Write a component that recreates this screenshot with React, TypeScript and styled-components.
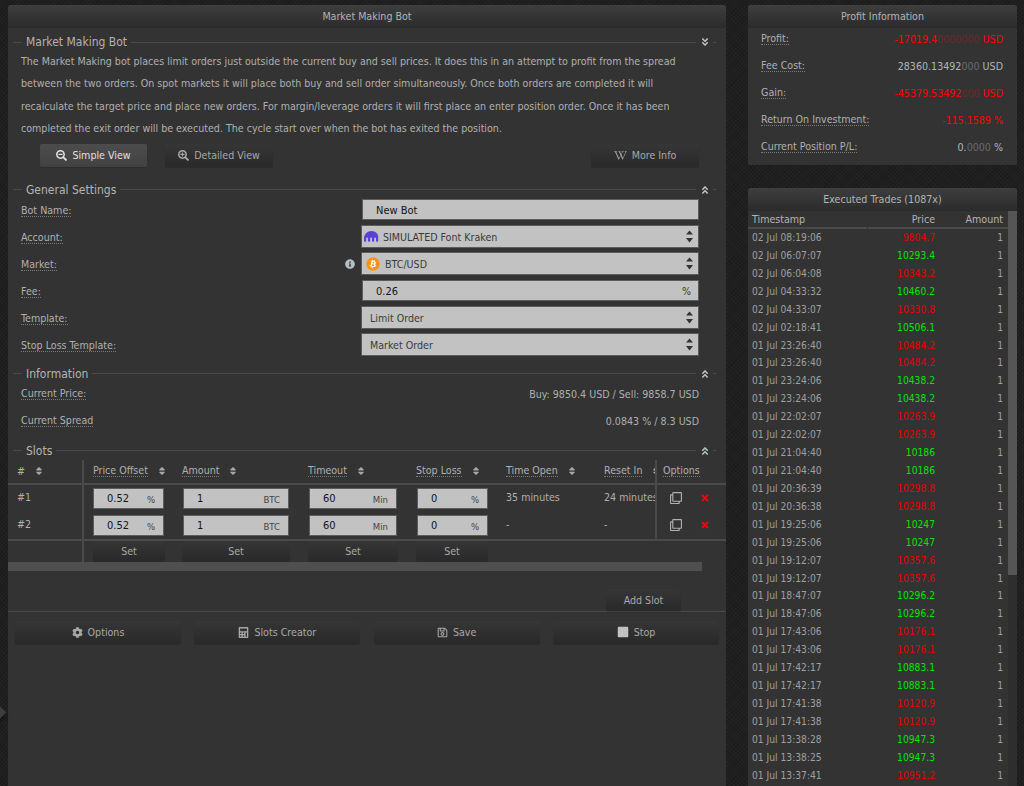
import * as React from 'react';
import styled, { createGlobalStyle } from 'styled-components';
import {
	FaAngleDoubleDown,
	FaAngleDoubleUp,
	FaBitcoin,
	FaCalculator,
	FaCog,
	FaInfoCircle,
	FaRegClone,
	FaRegSave,
	FaSearchMinus,
	FaSearchPlus,
	FaSort,
	FaStop,
	FaTimes,
	FaWikipediaW,
} from 'react-icons/fa';

const font = '"DejaVu Sans Condensed", "DejaVu Sans", sans-serif';

const Global = createGlobalStyle`
	html, body {
		margin: 0;
		height: 786px;
		overflow: hidden;
		background-color: #1f1f1f;
		background-image:
			repeating-linear-gradient(45deg, rgba(255,255,255,0.018) 0 1px, transparent 1px 3px),
			repeating-linear-gradient(-45deg, rgba(0,0,0,0.12) 0 1px, transparent 1px 3px);
		font-family: ${font};
		font-stretch: condensed;
		font-size: 10.6px;
		color: #b0b0b0;
	}
	* { box-sizing: border-box; }
`;

const Page = styled.div`
	display: flex;
	height: 786px;
	padding: 5px 7px 0 8px;
	gap: 22px;
	overflow: hidden;
`;

const SideHandle = styled.div`
	position: absolute;
	left: -7px;
	top: 707px;
	width: 11px;
	height: 11px;
	background: #3e3e3e;
	transform: rotate(45deg);
	box-shadow: 2px 2px 4px rgba(0,0,0,0.5);
`;

const Panel = styled.section<{ $width?: number; $height?: number; $grow?: boolean }>`
	width: ${p => (p.$width ? p.$width + 'px' : '100%')};
	${p => p.$height && `height: ${p.$height}px;`}
	${p => p.$grow && 'flex: 1; min-height: 0;'}
	background: #333333;
	border-radius: 3px 3px 0 0;
	flex-shrink: 0;
	overflow: hidden;
`;

const PanelTitle = styled.header`
	height: 23px;
	line-height: 22px;
	text-align: center;
	color: #b4b4b4;
	background: linear-gradient(#3e3e3e, #2b2b2b);
`;

const RightColumn = styled.div`
	width: 269px;
	display: flex;
	flex-direction: column;
	gap: 23px;
	height: 100%;
`;

const Section = styled.div<{ $top: number }>`
	padding: ${p => p.$top}px 10px 0 5px;
`;

const Legend = styled.div`
	display: flex;
	align-items: center;
	height: 16px;
	color: #b4b4b4;
	font-size: 12px;
	&::before {
		content: '';
		width: 9px;
		height: 1px;
		background: #4a4a4a;
		margin-right: 4px;
	}
	&::after {
		content: '';
		width: 3px;
		height: 1px;
		background: #4a4a4a;
		margin-left: 3px;
	}
`;

const LegendLine = styled.span`
	flex: 1;
	height: 1px;
	background: #4a4a4a;
	margin: 0 4px;
`;

const Chevrons = styled.span`
	display: flex;
	font-size: 10px;
	color: #b9c4cc;
`;

const Description = styled.p`
	margin: 0;
	line-height: 22.4px;
	padding: 0 13px;
	white-space: nowrap;
`;

const Actions = styled.div`
	display: flex;
	gap: 18px;
	padding: 4px 27px 0 32px;
`;

const Button = styled.button<{ $active?: boolean; $width?: number; $pushRight?: boolean }>`
	display: flex;
	align-items: center;
	justify-content: center;
	gap: 5px;
	width: ${p => (p.$width ? p.$width + 'px' : 'auto')};
	height: 23px;
	padding: 0;
	border: 0;
	border-radius: 2px;
	font-family: ${font};
	font-stretch: condensed;
	font-size: 10.6px;
	color: ${p => (p.$active ? '#e0e0e0' : '#a8a8a8')};
	background: ${p => (p.$active ? 'linear-gradient(#4c4c4c, #424242)' : 'linear-gradient(#363636, #292929)')};
	box-shadow: 0 1px 1px rgba(0,0,0,0.15);
	${p => p.$pushRight && 'margin-left: auto;'}
`;

const FieldList = styled.div`
	display: flex;
	flex-direction: column;
	gap: 3px;
	padding: 0 27px 0 5px;
`;

const FieldRow = styled.div`
	display: flex;
	align-items: center;
	height: 24px;
	padding-left: 8px;
`;

const Label = styled.span`
	flex: 1;
`;

const DottedLabel = styled.span`
	border-bottom: 1px dotted #7a7a7a;
	line-height: 11px;
`;

const InfoBadge = styled.span`
	display: flex;
	color: #b5bcc2;
	font-size: 10px;
	margin-right: 6px;
`;

const FieldBox = styled.div<{ $input?: boolean }>`
	display: flex;
	align-items: center;
	justify-content: space-between;
	width: ${p => (p.$input ? '337px' : '338px')};
	height: ${p => (p.$input ? '21px' : '23px')};
	margin-left: ${p => (p.$input ? '1px' : '0')};
	background: #c2c2c2;
	border: 1px solid #5c5c5c;
	padding: ${p => (p.$input ? '0 7px 0 13px' : '0 5px 0 2px')};
	color: #3a3a3a;
`;

const InputText = styled.span`
	color: #141414;
	font-size: 11px;
	padding-top: 1px;
`;

const SelectValue = styled.span<{ $plain?: boolean }>`
	display: flex;
	align-items: center;
	gap: 4px;
	padding-left: ${p => (p.$plain ? '6px' : '0')};
`;

const InfoList = styled.div`
	margin-top: -1px;
`;

const InfoRow = styled.div`
	display: flex;
	justify-content: space-between;
	align-items: center;
	height: 27px;
	padding: 0 27px 0 13px;
`;

const SlotsGrid = styled.div`
	display: grid;
	grid-template-columns: 74px 91px 126px 108px 90px 98px 60px 71px;
	margin-top: 1px;
`;

const HeadCell = styled.div<{ $line?: boolean; $pad?: number }>`
	display: flex;
	align-items: center;
	gap: 9px;
	height: 25px;
	padding-left: ${p => p.$pad ?? 9}px;
	border-bottom: 2px solid #4a4a4a;
	white-space: nowrap;
	overflow: hidden;
	${p => p.$line && 'box-shadow: inset 2px 0 0 #4a4a4a;'}
	svg { font-size: 10px; color: #a8a8a8; flex-shrink: 0; }
`;

const Cell = styled.div<{ $line?: boolean }>`
	display: flex;
	align-items: center;
	height: 27px;
	padding-left: ${p => (p.$line ? 10 : 9)}px;
	white-space: nowrap;
	overflow: hidden;
	${p => p.$line && 'box-shadow: inset 2px 0 0 #4a4a4a;'}
`;

const SlotInput = styled.div<{ $width: number }>`
	display: flex;
	align-items: center;
	justify-content: space-between;
	width: ${p => p.$width}px;
	height: 21px;
	margin-left: 1px;
	background: #c2c2c2;
	border: 1px solid #5c5c5c;
	padding: 0 8px 0 13px;
	color: #141414;
	font-size: 11px;
	small {
		font-size: 9.5px;
		color: #444;
		padding-top: 2px;
	}
`;

const NameCell = styled(Cell)`
	padding-bottom: 2px;
`;

const OptionsCell = styled(Cell)`
	gap: 18px;
	padding-left: 15px;
	font-size: 12px;
	color: #b0b0b0;
`;

const DeleteMark = styled.span`
	display: flex;
	color: #ff0000;
	font-size: 10px;
`;

const SetRow = styled.div`
	display: grid;
	grid-template-columns: 74px 91px 126px 108px 90px 229px;
	height: 23px;
	border-top: 2px solid #4a4a4a;
`;

const SetCell = styled.div<{ $line?: boolean }>`
	padding-left: ${p => (p.$line ? 11 : 9)}px;
	${p => p.$line && 'box-shadow: inset 2px 0 0 #4a4a4a;'}
`;

const SetButton = styled(Button)`
	height: 20px;
`;

const HScroll = styled.div`
	width: 694px;
	height: 9px;
	background: #4f4f4f;
`;

const AddRow = styled.div`
	display: flex;
	justify-content: flex-end;
	height: 41px;
	padding: 18px 45px 0 0;
	border-bottom: 1px solid #4a4a4a;
`;

const AddButton = styled(Button)`
	width: 75px;
	height: 22px;
`;

const Footer = styled.div`
	display: grid;
	grid-template-columns: repeat(4, 166px);
	justify-content: space-between;
	padding: 9px 7px 0;
`;

const StatRow = styled.div`
	display: flex;
	justify-content: space-between;
	align-items: center;
	height: 27px;
	padding: 0 14px 0 13px;
`;

const StatValue = styled.span<{ $red?: boolean }>`
	color: ${p => (p.$red ? '#ff0000' : '#b4b4b4')};
`;

const Faded = styled.span<{ $red?: boolean }>`
	color: ${p => (p.$red ? '#6b2a2a' : '#6a6a6a')};
`;

const StatList = styled.div`
	margin-top: -3px;
`;

const TradesBody = styled.div`
	display: flex;
	height: 100%;
	background: #333;
`;

const TradesList = styled.div`
	flex: 1;
`;

const TradesScroll = styled.div`
	width: 9px;
	background: #2e2e2e;
	&::before {
		content: '';
		display: block;
		height: 364px;
		background: #555;
	}
`;

const TradeGrid = styled.div`
	display: grid;
	grid-template-columns: 120px 72px 68px;
`;

const TradeHead = styled.div<{ $right?: boolean }>`
	height: 18px;
	line-height: 17px;
	padding: ${p => (p.$right ? '0 5px 0 0' : '0 0 0 4px')};
	text-align: ${p => (p.$right ? 'right' : 'left')};
	border-bottom: 2px solid #4a4a4a;
	color: #b4b4b4;
	${p => !p.$right && 'margin-right: 1px;'}
`;

const TradeCell = styled.div<{ $right?: boolean; $color?: string }>`
	height: 17.93px;
	line-height: 18px;
	padding: ${p => (p.$right ? '0 5px 0 0' : '0 0 0 4px')};
	text-align: ${p => (p.$right ? 'right' : 'left')};
	color: ${p => p.$color || '#a0a0a0'};
	font-size: 10.2px;
`;

const KrakenLogo = () => (
	<svg width="15" height="11" viewBox="0 0 15 11" fill="#5741d9">
		<path d="M7.5 0C3.4 0 0 3.2 0 7.3v2.4a1.1 1.1 0 0 0 2.2 0V7.3a.9.9 0 0 1 1.8 0v2.4a1.1 1.1 0 0 0 2.2 0V7.3a.9.9 0 0 1 1.8 0v2.4a1.1 1.1 0 0 0 2.2 0V7.3a.9.9 0 0 1 1.8 0v2.4a1.1 1.1 0 0 0 2.2 0V7.3C15 3.2 11.6 0 7.5 0z" />
	</svg>
);

const SelectArrows = () => (
	<svg width="7" height="13" viewBox="0 0 7 13" fill="#333">
		<path d="M3.5 0.5 7 4.5H0z" />
		<path d="M0 8h7l-3.500 4.500z" />
	</svg>
);

const BitcoinIcon = styled(FaBitcoin)`
	color: #f7931a;
	font-size: 14px;
	margin: 0 1px 0 2px;
	background: radial-gradient(#fff 45%, transparent 50%);
	border-radius: 50%;
`;

const SectionTitle = ({ title, up = true }: { title: string; up?: boolean }) => (
	<Legend>
		{title}
		<LegendLine />
		<Chevrons>{up ? <FaAngleDoubleUp /> : <FaAngleDoubleDown />}</Chevrons>
	</Legend>
);

const slots = [
	{ name: '#1', open: '35 minutes', reset: '24 minutes' },
	{ name: '#2', open: '-', reset: '-' },
];

const trades: [string, string, 'r' | 'g'][] = [
	['02 Jul 08:19:06', '9804.7', 'r'],
	['02 Jul 06:07:07', '10293.4', 'g'],
	['02 Jul 06:04:08', '10343.2', 'r'],
	['02 Jul 04:33:32', '10460.2', 'g'],
	['02 Jul 04:33:07', '10330.8', 'r'],
	['02 Jul 02:18:41', '10506.1', 'g'],
	['01 Jul 23:26:40', '10484.2', 'r'],
	['01 Jul 23:26:40', '10484.2', 'r'],
	['01 Jul 23:24:06', '10438.2', 'g'],
	['01 Jul 23:24:06', '10438.2', 'g'],
	['01 Jul 22:02:07', '10263.9', 'r'],
	['01 Jul 22:02:07', '10263.9', 'r'],
	['01 Jul 21:04:40', '10186', 'g'],
	['01 Jul 21:04:40', '10186', 'g'],
	['01 Jul 20:36:39', '10298.8', 'r'],
	['01 Jul 20:36:38', '10298.8', 'r'],
	['01 Jul 19:25:06', '10247', 'g'],
	['01 Jul 19:25:06', '10247', 'g'],
	['01 Jul 19:12:07', '10357.6', 'r'],
	['01 Jul 19:12:07', '10357.6', 'r'],
	['01 Jul 18:47:07', '10296.2', 'g'],
	['01 Jul 18:47:06', '10296.2', 'g'],
	['01 Jul 17:43:06', '10176.1', 'r'],
	['01 Jul 17:43:06', '10176.1', 'r'],
	['01 Jul 17:42:17', '10883.1', 'g'],
	['01 Jul 17:42:17', '10883.1', 'g'],
	['01 Jul 17:41:38', '10120.9', 'r'],
	['01 Jul 17:41:38', '10120.9', 'r'],
	['01 Jul 13:38:28', '10947.3', 'g'],
	['01 Jul 13:38:25', '10947.3', 'g'],
	['01 Jul 13:37:41', '10951.2', 'r'],
];

export default function App() {
	return (
		<Page>
			<Global />
			<SideHandle />
			<Panel $width={718}>
				<PanelTitle>Market Making Bot</PanelTitle>
				<Section $top={6}>
					<SectionTitle title="Market Making Bot" up={false} />
				</Section>
				<Description>
					The Market Making bot places limit orders just outside the current buy and sell prices. It does this in an attempt to profit from the spread
					<br />
					between the two orders. On spot markets it will place both buy and sell order simultaneously. Once both orders are completed it will
					<br />
					recalculate the target price and place new orders. For margin/leverage orders it will first place an enter position order. Once it has been
					<br />
					completed the exit order will be executed. The cycle start over when the bot has exited the position.
				</Description>
				<Actions>
					<Button $active $width={107}><FaSearchMinus size={11} /> Simple View</Button>
					<Button $width={108}><FaSearchPlus size={11} /> Detailed View</Button>
					<Button $width={108} $pushRight><FaWikipediaW size={13} /> More Info</Button>
				</Actions>

				<Section $top={15}>
					<SectionTitle title="General Settings" />
				</Section>
				<FieldList>
					<FieldRow>
						<Label><DottedLabel>Bot Name:</DottedLabel></Label>
						<FieldBox $input><InputText>New Bot</InputText></FieldBox>
					</FieldRow>
					<FieldRow>
						<Label><DottedLabel>Account:</DottedLabel></Label>
						<FieldBox>
							<SelectValue><KrakenLogo /> SIMULATED Font Kraken</SelectValue>
							<SelectArrows />
						</FieldBox>
					</FieldRow>
					<FieldRow>
						<Label><DottedLabel>Market:</DottedLabel></Label>
						<InfoBadge><FaInfoCircle /></InfoBadge>
						<FieldBox>
							<SelectValue><BitcoinIcon /> BTC/USD</SelectValue>
							<SelectArrows />
						</FieldBox>
					</FieldRow>
					<FieldRow>
						<Label><DottedLabel>Fee:</DottedLabel></Label>
						<FieldBox $input><InputText>0.26</InputText><span>%</span></FieldBox>
					</FieldRow>
					<FieldRow>
						<Label><DottedLabel>Template:</DottedLabel></Label>
						<FieldBox>
							<SelectValue $plain>Limit Order</SelectValue>
							<SelectArrows />
						</FieldBox>
					</FieldRow>
					<FieldRow>
						<Label><DottedLabel>Stop Loss Template:</DottedLabel></Label>
						<FieldBox>
							<SelectValue $plain>Market Order</SelectValue>
							<SelectArrows />
						</FieldBox>
					</FieldRow>
				</FieldList>

				<Section $top={9}>
					<SectionTitle title="Information" />
				</Section>
				<InfoList>
					<InfoRow>
						<DottedLabel>Current Price:</DottedLabel>
						<span>Buy: 9850.4 USD / Sell: 9858.7 USD</span>
					</InfoRow>
					<InfoRow>
						<DottedLabel>Current Spread</DottedLabel>
						<span>0.0843 % / 8.3 USD</span>
					</InfoRow>
				</InfoList>

				<Section $top={8}>
					<SectionTitle title="Slots" />
				</Section>
				<SlotsGrid>
					<HeadCell>#<FaSort /></HeadCell>
					<HeadCell $line $pad={11}><DottedLabel>Price Offset</DottedLabel><FaSort /></HeadCell>
					<HeadCell><DottedLabel>Amount</DottedLabel><FaSort /></HeadCell>
					<HeadCell><DottedLabel>Timeout</DottedLabel><FaSort /></HeadCell>
					<HeadCell><DottedLabel>Stop Loss</DottedLabel><FaSort /></HeadCell>
					<HeadCell><DottedLabel>Time Open</DottedLabel><FaSort /></HeadCell>
					<HeadCell><DottedLabel>Reset In</DottedLabel><FaSort /></HeadCell>
					<HeadCell $line $pad={8}><DottedLabel>Options</DottedLabel></HeadCell>
					{slots.map(slot => (
						<React.Fragment key={slot.name}>
							<NameCell>{slot.name}</NameCell>
							<Cell $line><SlotInput $width={71}>0.52 <small>%</small></SlotInput></Cell>
							<Cell><SlotInput $width={106}>1 <small>BTC</small></SlotInput></Cell>
							<Cell><SlotInput $width={88}>60 <small>Min</small></SlotInput></Cell>
							<Cell><SlotInput $width={71}>0 <small>%</small></SlotInput></Cell>
							<NameCell>{slot.open}</NameCell>
							<NameCell>{slot.reset}</NameCell>
							<OptionsCell $line>
								<FaRegClone />
								<DeleteMark><FaTimes /></DeleteMark>
							</OptionsCell>
						</React.Fragment>
					))}
				</SlotsGrid>
				<SetRow>
					<SetCell />
					<SetCell $line><SetButton $width={72}>Set</SetButton></SetCell>
					<SetCell><SetButton $width={108}>Set</SetButton></SetCell>
					<SetCell><SetButton $width={90}>Set</SetButton></SetCell>
					<SetCell><SetButton $width={72}>Set</SetButton></SetCell>
					<SetCell />
				</SetRow>
				<HScroll />
				<AddRow><AddButton>Add Slot</AddButton></AddRow>
				<Footer>
					<Button><FaCog size={11} /> Options</Button>
					<Button><FaCalculator size={11} /> Slots Creator</Button>
					<Button><FaRegSave size={11} /> Save</Button>
					<Button><FaStop size={12} color="#c2c2c2" /> Stop</Button>
				</Footer>
			</Panel>

			<RightColumn>
				<Panel $height={160}>
					<PanelTitle>Profit Information</PanelTitle>
					<StatList>
						<StatRow>
							<DottedLabel>Profit:</DottedLabel>
							<StatValue $red>-17019.4<Faded $red>0000000</Faded> USD</StatValue>
						</StatRow>
						<StatRow>
							<DottedLabel>Fee Cost:</DottedLabel>
							<StatValue>28360.13492<Faded>000</Faded> USD</StatValue>
						</StatRow>
						<StatRow>
							<DottedLabel>Gain:</DottedLabel>
							<StatValue $red>-45379.53492<Faded $red>000</Faded> USD</StatValue>
						</StatRow>
						<StatRow>
							<DottedLabel>Return On Investment:</DottedLabel>
							<StatValue $red>-115.1589 %</StatValue>
						</StatRow>
						<StatRow>
							<DottedLabel>Current Position P/L:</DottedLabel>
							<StatValue>0.<Faded>0000</Faded> %</StatValue>
						</StatRow>
					</StatList>
				</Panel>
				<Panel $grow>
					<PanelTitle>Executed Trades (1087x)</PanelTitle>
					<TradesBody>
						<TradesList>
							<TradeGrid>
								<TradeHead>Timestamp</TradeHead>
								<TradeHead $right>Price</TradeHead>
								<TradeHead $right>Amount</TradeHead>
								{trades.map((t, i) => (
									<React.Fragment key={i}>
										<TradeCell>{t[0]}</TradeCell>
										<TradeCell $right $color={t[2] === 'r' ? '#e60000' : '#00e600'}>{t[1]}</TradeCell>
										<TradeCell $right>1</TradeCell>
									</React.Fragment>
								))}
							</TradeGrid>
						</TradesList>
						<TradesScroll />
					</TradesBody>
				</Panel>
			</RightColumn>
		</Page>
	);
}
